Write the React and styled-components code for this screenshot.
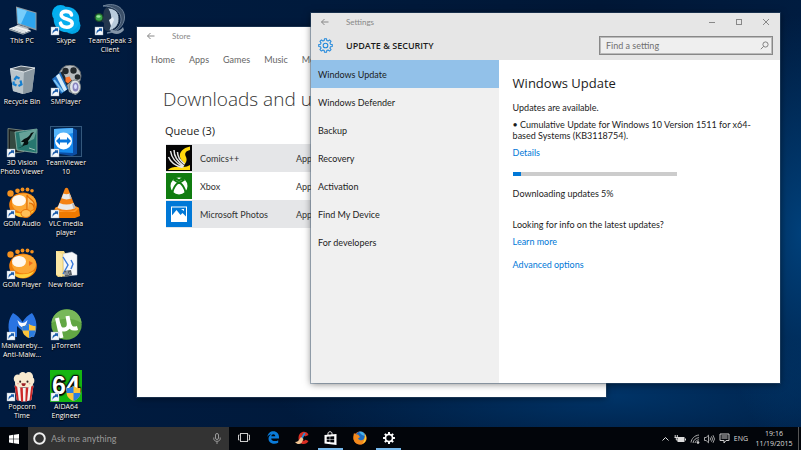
import React, { useState } from "react";
import styled, { createGlobalStyle } from "styled-components";

const GlobalStyle = createGlobalStyle`
  * {
    box-sizing: border-box;
  }
  body {
    margin: 0;
    font-family: Lato, "Open Sans", sans-serif;
    font-size: 9px;
    color: #1c1c1c;
  }
  button, input {
    font: inherit;
    color: inherit;
    border: 0;
    padding: 0;
    background: none;
  }
  ul, h1, h2, p {
    margin: 0;
    padding: 0;
    list-style: none;
    font-weight: 400;
  }
  svg {
    display: block;
    flex: none;
  }
`;

const Screen = styled.div`
  height: 100vh;
  display: flex;
  flex-direction: column;
  overflow: hidden;
  background:
    radial-gradient(ellipse 90px 220px at 100% 52%, #00407a 0%, transparent 100%),
    radial-gradient(ellipse 330px 70px at 76% 88%, #003468 0%, transparent 100%),
    linear-gradient(90deg, #001b40 0%, #001a3c 40%, #001736 75%, #001c40 100%);
`;

const Desktop = styled.main`
  flex: 1;
  min-height: 0;
  position: relative;
  display: flex;
  align-items: flex-start;
  padding-top: 4px;
`;

const IconColumn = styled.div`
  width: 44px;
  display: flex;
  flex-direction: column;
`;

const Shortcut = styled.button`
  height: 61px;
  display: flex;
  flex-direction: column;
  align-items: center;
  color: #fff;
  font-family: "Open Sans", sans-serif;
  font-size: 7px;
  line-height: 9px;
  white-space: pre;
  text-align: center;
  text-shadow: 0 1px 1px #000, 0 0 2px #000;
`;

const Window = styled.section`
  position: absolute;
  display: flex;
  flex-direction: column;
  overflow: hidden;
  background: #fff;
  box-shadow: 0 0 0 1px rgba(60, 90, 120, 0.4), 0 1px 7px rgba(0, 0, 0, 0.5);
`;

const StoreWindow = styled(Window)`
  left: 137px;
  right: 195px;
  top: 27px;
  bottom: 30px;
`;

const SettingsWindow = styled(Window)`
  left: 311px;
  right: 21px;
  top: 13px;
  bottom: 44px;
`;

const TitleBar = styled.header`
  height: 18px;
  flex: none;
  display: flex;
  align-items: center;
  gap: 17px;
  padding: 0 9px;
  font-size: 8px;
  color: #888;
  background: ${(props) => props.$bg || "#fff"};
`;

const WindowButtons = styled.div`
  margin-left: auto;
  display: flex;
  gap: 17px;
`;

const StoreNav = styled.nav`
  display: flex;
  gap: 14px;
  padding: 8px 14px;
  line-height: 14px;
  white-space: nowrap;
`;

const NavLink = styled.a`
  color: #666;
  text-decoration: none;
`;

const StoreBody = styled.div`
  padding: 10px 28px;
`;

const StoreTitle = styled.h1`
  margin-left: -2px;
  font-family: "Open Sans", sans-serif;
  font-size: 19px;
  line-height: 28px;
  font-weight: 300;
  color: #333;
  white-space: nowrap;
`;

const QueueTitle = styled.h2`
  padding: 9px 0 4px;
  font-family: "Open Sans", sans-serif;
  font-size: 11px;
  line-height: 18px;
`;

const QueueRow = styled.li`
  height: 28px;
  display: flex;
  align-items: center;
  gap: 8px;
  margin-left: 1px;
  color: #333;
  background: ${(props) => (props.$shaded ? "#e5e6e8" : "#fff")};
`;

const QueueName = styled.span`
  width: 88px;
  white-space: nowrap;
`;

const SettingsHeader = styled.div`
  height: 29px;
  flex: none;
  display: flex;
  align-items: center;
  gap: 13px;
  padding: 0 7px;
  background: #e6e6e6;
`;

const SettingsTitle = styled.h1`
  font-family: "Open Sans", sans-serif;
  font-size: 9px;
  font-weight: 600;
  flex: 1;
`;

const SearchBox = styled.label`
  width: 174px;
  height: 19px;
  display: flex;
  align-items: center;
  padding: 0 3px 0 6px;
  border: 1px solid #888;
  outline: 1px solid #bbb;
  outline-offset: -2px;
  background: #efefef;

  input {
    flex: 1;
    min-width: 0;
    outline: 0;
  }
  input::placeholder {
    color: #707070;
  }
`;

const SettingsBody = styled.div`
  flex: 1;
  display: flex;
`;

const SideNav = styled.nav`
  width: 40%;
  display: flex;
  flex-direction: column;
  background: #f0f0f0;
`;

const SideItem = styled.button`
  height: 28px;
  padding: 0 7px;
  text-align: left;
  background: ${(props) => (props.$active ? "#92c1e9" : "transparent")};
`;

const Details = styled.div`
  flex: 1;
  padding: 12px 22px 12px 14px;
  line-height: 11px;
`;

const DetailsTitle = styled.h2`
  font-family: "Open Sans", sans-serif;
  font-size: 13px;
  line-height: 22px;
  margin-bottom: 8px;
`;

const Para = styled.p`
  margin-bottom: ${(props) => props.$gap || 6}px;
`;

const Link = styled.a`
  color: #0078d7;
  text-decoration: none;
`;

const Progress = styled.div`
  width: 164px;
  height: 4px;
  background: #ccc;
  margin-bottom: 12px;
`;

const ProgressFill = styled.div`
  height: 4px;
  background: #0078d7;
`;

const Taskbar = styled.footer`
  height: 23px;
  flex: none;
  display: flex;
  background: #02050a;
  color: #ddd;
`;

const StartButton = styled.button`
  width: 28px;
  display: grid;
  place-items: center;
`;

const Cortana = styled.label`
  width: 201px;
  display: flex;
  align-items: center;
  gap: 5px;
  padding: 0 8px 0 5px;
  background: #333;

  input {
    flex: 1;
    min-width: 0;
    outline: 0;
  }
  input::placeholder {
    color: #999;
  }
`;

const TaskButton = styled.button`
  width: 25px;
  margin: 0 2px;
  display: grid;
  place-items: center;
  border-bottom: 2px solid ${(props) => (props.$open ? "#76b9ed" : "transparent")};
`;

const Tray = styled.div`
  margin-left: auto;
  display: flex;
  align-items: center;
  gap: 4px;
  font-family: "Open Sans", sans-serif;
  font-size: 7px;
`;

const Clock = styled.time`
  width: 40px;
  margin-left: 2px;
  line-height: 10px;
  text-align: center;
`;

const ShowDesktop = styled.button`
  width: 3px;
  height: 23px;
  border-left: 1px solid #555;
`;

const Badge = () => (
  <g>
    <rect x="1" y="23" width="8" height="8" fill="#f4f8fc" stroke="#9ab" strokeWidth=".4" />
    <path d="M2.500 30c-.3-3 .8-4.200 2.500-4.400v-1.400h3v3.500l-1-1c-2 .2-3.300 1-4.500 3.300z" fill="#1c5dab" />
  </g>
);

const Shield = ({ x, y, size }) => (
  <svg x={x} y={y} width={size} height={size} viewBox="0 0 14 14">
    <path d="M7 0c2 1.500 4 2 6.500 2v4c0 4-3 6.500-6.500 8C3.500 12.500.5 10 .5 6V2C3 2 5 1.500 7 0z" fill="#fcc43c" />
    <path d="M7 0C5 1.500 3 2 .5 2v4.500H7zM7 6.500h6.500C13.300 10.300 10.300 12.600 7 14z" fill="#2a7de1" />
  </svg>
);

const Glyph = ({ children, shortcut = true }) => (
  <svg width="32" height="32" viewBox="0 0 32 32">
    {children}
    {shortcut && <Badge />}
  </svg>
);

const PcIcon = () => (
  <Glyph shortcut={false}>
    <path d="M10 2.500l20.500 6v18L11 20z" fill="#8f9ba3" />
    <path d="M11 4l18.500 5.300v15.500L12 19z" fill="#2ea5ee" />
    <path d="M11 4l10 2.800L15 20l-3-1z" fill="#77cdfb" />
    <path d="M17 22l5 1.500-1 3-5-2z" fill="#8e979d" />
    <path d="M12 20.500l12 4.500-4 1.500-11-4z" fill="#b8c0c5" />
    <path d="M3 24.500l7-2.500 15 4.500-8 3z" fill="#eef1f2" />
    <path d="M3 24.500l14 5 8-3v1l-8 3.200L3 26z" fill="#9aa5ab" />
    <path d="M6 24.500l12 4M8 23.600l12 4" stroke="#b4bdc2" strokeWidth=".5" />
  </Glyph>
);

const SkypeIcon = () => (
  <Glyph>
    <circle cx="10.500" cy="9.500" r="8.500" fill="#00aff0" />
    <circle cx="22" cy="21.500" r="8.500" fill="#00a4e4" />
    <circle cx="16.500" cy="15.500" r="12.800" fill="#08aeee" />
    <path d="M21.500 11c-.8-4.500-10.300-5-10.300-.3 0 5.500 11 3 11 8.800 0 5-10.500 5-11.700-.3" fill="none" stroke="#fff" strokeWidth="3.600" strokeLinecap="round" />
  </Glyph>
);

const TeamSpeakIcon = () => (
  <Glyph>
    <path d="M9 2c14-5 24 4 21 15-2 7-9 12-17 12 10-2 14-8 14-14C27 7 19 2 9 2z" fill="#3b5069" stroke="#7f93a8" strokeWidth=".8" />
    <path d="M13 4c8 0 12 4 12 11s-5 11-11 12c4-6 4-18-1-23z" fill="#b8cbdc" stroke="#26394f" />
    <path d="M13 3c-3 2-4 5-3.500 9L7 17l3 2v4c0 3 2 4 5 4 3-6 3-18-2-24z" fill="#24374e" />
    <path d="M15 16l4-3 1 3-3 6z" fill="#e7eff7" />
    <path d="M18 25c4 4 9 1 11-2l1 3c-4 5-10 5-14 1z" fill="#8395a8" />
    <circle cx="5" cy="13.500" r="4.500" fill="#1d4429" />
    <circle cx="5" cy="13.500" r="3.300" fill="#38a64a" />
    <ellipse cx="4.500" cy="12.500" rx="2" ry="1.200" fill="#9be69c" />
  </Glyph>
);

const BinIcon = () => (
  <Glyph shortcut={false}>
    <path d="M4 4l11-3 14 2-3 23.500-9 2.500L7 26z" fill="#a9b4bc" />
    <path d="M4 4l14 3-1 22-10-3z" fill="#bac4ca" />
    <path d="M18 7l11-4-3 23.500-9 2.500z" fill="#8c99a2" />
    <path d="M4 4l11-3 14 2-11 4z" fill="#59646d" />
    <path d="M4 4l11-3 14 2-11 4z" fill="none" stroke="#e6ebee" strokeWidth=".9" />
    <g fill="none" stroke="#157fd0" strokeWidth="2.200">
      <path d="M8.300 15l2.200-3 3 1.500M14.500 15.500l1 4-3 1.500M10.500 20.500L7.500 19l.2-2.500" />
    </g>
  </Glyph>
);

const SmPlayerIcon = () => (
  <Glyph>
    <circle cx="20" cy="11" r="11" fill="#b9bdc0" stroke="#60676c" />
    <g fill="#24292d">
      <circle cx="15.500" cy="6" r="3.200" />
      <circle cx="23.500" cy="5.500" r="3.200" />
      <circle cx="27.500" cy="12" r="2.800" />
      <circle cx="20" cy="17" r="2.500" />
    </g>
    <path d="M2 14L11 7l8 16-8 6z" fill="#2170c3" />
    <path d="M6 11l3-2.500 8 16-3 2z" fill="#d6ecfb" />
    <path d="M10.500 7.500l2-1.500 8 17-2 1.500z" fill="#222b34" />
    <path d="M4 15l9 12" stroke="#80c6f4" strokeWidth="2" />
    <path d="M15.500 12.500l4-1 2 4-3.500 3-2.500-2z" fill="#ff762d" />
    <path d="M17 20l6-5c5-1 8 3 7 8l-4 7-7-3z" fill="#9ca4a8" />
    <ellipse cx="25" cy="22" rx="5.500" ry="7" fill="#e0e4e6" stroke="#747c80" />
    <ellipse cx="25.500" cy="22" rx="3" ry="4.500" fill="#8884bd" />
    <ellipse cx="25.500" cy="21.500" rx="1.500" ry="2.500" fill="#d9dcff" />
  </Glyph>
);

const VisionIcon = () => (
  <Glyph>
    <path d="M2 2.500l16 2v21L2 28z" fill="#1c2120" stroke="#718078" />
    <path d="M4 5l13 2v16L4 25z" fill="#344941" />
    <path d="M9 6l22-3v24l-20-3z" fill="#27776f" stroke="#8fb5aa" strokeWidth=".8" />
    <path d="M13 7l18-4-3 10-13 6z" fill="#66a298" />
    <path d="M12 22c5-1 5-3 6-6l-3 0c4-5 7-3 10-9l3-1c-3 4-4 7-6 9 1 2 0 4-2 4-3 0-4 3-8 3z" fill="#06100f" />
    <path d="M23 22l6 2" stroke="#a3c4b9" />
  </Glyph>
);

const TeamViewerIcon = () => (
  <Glyph>
    <rect x=".5" y=".5" width="31" height="30" fill="#04234a" stroke="#34587c" />
    <path d="M4 3l19-1 4 2v24l-5 2L4 27z" fill="#0b4da3" />
    <path d="M4 3l19-1v25L4 26z" fill="#1689ed" />
    <path d="M4 3l19-1v5L4 11z" fill="#55b4fa" />
    <circle cx="13.500" cy="15" r="8.500" fill="#fff" />
    <path d="M6 15l4-4v2.500h7V11l4 4-4 4v-2.500h-7V19z" fill="#0876dc" />
  </Glyph>
);

const Paw = () => (
  <g>
    <g fill="#f5911e">
      <circle cx="4.500" cy="6.500" r="3.200" />
      <circle cx="11.500" cy="3.800" r="2.300" />
      <circle cx="16.500" cy="2.500" r="1.900" />
      <circle cx="21.500" cy="2.500" r="1.900" />
      <circle cx="26" cy="3.800" r="1.800" />
    </g>
    <ellipse cx="17" cy="18" rx="13.800" ry="12.500" fill="#f17e08" />
    <ellipse cx="18" cy="16" rx="12" ry="9.500" fill="#fca835" />
    <path d="M7 25c4 7 17 7 21-2-5 4-14 4-21 2z" fill="#ffd03c" />
    <ellipse cx="13" cy="13.500" rx="7" ry="5.500" fill="#fff" opacity=".92" />
  </g>
);

const GomAudioIcon = () => (
  <Glyph>
    <Paw />
    <path d="M21 27V8c2 5 9 5 7 12-1-4-4-4-5-4" fill="#fbc36b" stroke="#e16b00" strokeWidth="1.200" />
    <ellipse cx="20" cy="26.500" rx="5" ry="4" fill="#ffbf58" stroke="#e77508" />
  </Glyph>
);

const GomPlayerIcon = () => (
  <Glyph>
    <Paw />
    <path d="M23 13l4 2-4 3z" fill="#ef6d1a" />
  </Glyph>
);

const VlcIcon = () => (
  <Glyph>
    <path d="M5 21l4-2h16l4 2 1 8-5 2H6l-3-3z" fill="#ef7a00" />
    <path d="M5 21l4-2h16l4 2-4 4H9z" fill="#ff9d2e" />
    <path d="M15 1.500q1.500-1.500 3 0l8 20.500c-3 3.500-16 3.500-19 0z" fill="#f58213" />
    <path d="M13.400 6.500q3 1.500 6.200 0l1.900 4.800q-4.800 2.200-10 0zM9.500 16q7 3 14 0l2 5q-9 4-18 0z" fill="#e9e9e9" />
    <path d="M19 6.800l.6-.3 1.900 4.800-1.500.5zM22 16.700l1.500-.7 2 5-2 .8z" fill="#bbb" />
  </Glyph>
);

const FolderIcon = () => (
  <Glyph shortcut={false}>
    <path d="M6 3h8l1 2h5v23l-12 1-2-2z" fill="#f6d982" />
    <path d="M6 3l6 3v23l-6-3z" fill="#fbe7a4" />
    <path d="M13 6l9-2 5 3v20l-13 1z" fill="#f5f7fa" stroke="#bbc3ca" strokeWidth=".5" />
    <path d="M13 9l5 8-5 9M21 12l2 4-2 5" fill="none" stroke="#3678dc" strokeWidth="1.400" />
    <path d="M14 23l7-1 1 5-7 2z" fill="#555d65" />
    <path d="M15 24l1 3 1-4 1 4 2-3" stroke="#b9c0c5" strokeWidth=".6" fill="none" />
  </Glyph>
);

const MalwareIcon = () => (
  <Glyph>
    <path d="M7 4c4 2 7 5 9.500 9C19 9 22 6 26 4c5 6 6 16 2 24h-6V17l-5.500 5-5.500-5v11H5C1 20 2 10 7 4z" fill="#2a74e2" />
    <path d="M11.500 11c1 5 3 7 5 7s4-2 5-7c-3 4-7 4-10 0z" fill="#f6faff" />
    <Shield x={16} y={15} size={14} />
  </Glyph>
);

const TorrentIcon = () => (
  <Glyph>
    <circle cx="16.500" cy="15.500" r="15.200" fill="#62a744" />
    <path d="M1.500 14C3-3 30-5 31.500 14c-10-6-20-5-30 0z" fill="#78b85a" />
    <path d="M7 9l4.500 20M8.500 15c1 5 3 6 6 5.500 4-.7 5-4 4-8L17.500 7M18.500 12c1 6 3 9 9 7" fill="none" stroke="#fff" strokeWidth="4" />
  </Glyph>
);

const PopcornIcon = () => (
  <Glyph>
    <g transform="translate(3 1) scale(.86 .97)">
      <g fill="#f8ead0">
        <circle cx="10" cy="8" r="4.500" />
        <circle cx="16" cy="5.500" r="4.500" />
        <circle cx="23" cy="6" r="5" />
        <circle cx="26" cy="10" r="3.500" />
        <rect x="7" y="7" width="21" height="10" rx="4" />
      </g>
      <path d="M6.500 15q11 5 22 0L26 30q-8.500 3-17 0z" fill="#f5f2ef" />
      <path d="M6.500 15l3 1.300L11.500 31 9 30zM13 17h3l.5 14.600h-2.500zM19.500 17h3L21 31.400h-2zM25.800 16l2.700-1L26 30l-2.200.8z" fill="#cc2727" />
      <circle cx="13" cy="11" r="1.200" fill="#352320" />
      <circle cx="21.500" cy="11" r="1.200" fill="#352320" />
      <path d="M14.500 12.500h5c0 4-5 4-5 0z" fill="#9c1f24" />
      <circle cx="10.500" cy="13" r="1" fill="#efaaa0" />
      <circle cx="24" cy="13" r="1" fill="#efaaa0" />
    </g>
  </Glyph>
);

const AidaIcon = () => (
  <Glyph>
    <rect width="32" height="32" fill="#16b611" />
    <text x="2" y="24" fontFamily="Liberation Sans, sans-serif" fontSize="25" fontWeight="700" fill="#fff" stroke="#111" strokeWidth="1.500" paintOrder="stroke">
      64
    </text>
    <Shield x={16} y={16} size={15} />
  </Glyph>
);

const columns = [
  [
    ["This PC", PcIcon],
    ["Recycle Bin", BinIcon],
    ["3D Vision\nPhoto Viewer", VisionIcon],
    ["GOM Audio", GomAudioIcon],
    ["GOM Player", GomPlayerIcon],
    ["Malwareby...\nAnti-Malw...", MalwareIcon],
    ["Popcorn\nTime", PopcornIcon],
  ],
  [
    ["Skype", SkypeIcon],
    ["SMPlayer", SmPlayerIcon],
    ["TeamViewer\n10", TeamViewerIcon],
    ["VLC media\nplayer", VlcIcon],
    ["New folder", FolderIcon],
    ["µTorrent", TorrentIcon],
    ["AIDA64\nEngineer", AidaIcon],
  ],
  [["TeamSpeak 3\nClient", TeamSpeakIcon]],
];

const ComicsIcon = () => (
  <svg width="26" height="26" viewBox="0 0 26 26">
    <rect width="26" height="26" fill="#050505" />
    <path d="M24 1.500C17 3 13 7 14 12c1 4 4 4 4 8 3-3 3-6 2-8-2-4 0-6 4-7z" fill="#ffd90c" />
    <path d="M2 25c3-4 10-3 15-3 3 0 5-1 7-2v5z" fill="#ffd90c" />
    <path d="M4.500 6c1 7 5 12 13 16M8 5c0 7 4 12 10 16M11.500 7c0 5 3 9 7 12M2.500 12c2 5 7 9 14 10.500" fill="none" stroke="#e6e6e6" strokeWidth="1.500" />
  </svg>
);

const XboxIcon = () => (
  <svg width="26" height="26" viewBox="0 0 26 26">
    <rect width="26" height="26" fill="#107c10" />
    <circle cx="13" cy="13" r="8.500" fill="#fff" />
    <path d="M8 5.500c2 0 4 1 5 2 1-1 3-2 5-2M13 9C9 12 7 16 6.500 19.500M13 9c4 3 6 7 6.500 10.500M7.500 6.500L13 10l5.500-3.500" fill="none" stroke="#107c10" strokeWidth="1.900" />
  </svg>
);

const PhotosIcon = () => (
  <svg width="26" height="26" viewBox="0 0 26 26">
    <rect width="26" height="26" fill="#0078d7" />
    <rect x="5.500" y="6" width="15" height="14.500" fill="none" stroke="#fff" />
    <path d="M5.500 20.500V15l5-6 4 5 2-2 4 4v4.500z" fill="#fff" />
    <path d="M15 8h3v2z" fill="#fff" />
  </svg>
);

const queue = [
  ["Comics++", ComicsIcon],
  ["Xbox", XboxIcon],
  ["Microsoft Photos", PhotosIcon],
];

const BackArrow = () => (
  <svg width="9" height="8" viewBox="0 0 9 8" fill="none" stroke="#888">
    <path d="M8.500 4H1.500M4.500 1l-3 3 3 3" />
  </svg>
);

// toothed wheel, each tooth is four points on two radii
const gearPath = (teeth, outer, inner) => {
  const step = (Math.PI * 2) / teeth;
  const points = [];
  for (let i = 0; i < teeth; i++) {
    [[-0.32, inner], [-0.2, outer], [0.2, outer], [0.32, inner]].forEach(([k, r]) => {
      const a = (i + k) * step;
      points.push(`${(8 + r * Math.sin(a)).toFixed(2)} ${(8 - r * Math.cos(a)).toFixed(2)}`);
    });
  }
  return `M${points.join("L")}Z`;
};

const Gear = () => (
  <svg width="15" height="15" viewBox="0 0 16 16" fill="none" stroke="#1e87dc" strokeWidth="1.100">
    <path d={gearPath(8, 7.3, 5.5)} strokeLinejoin="round" />
    <circle cx="8" cy="8" r="2.500" />
  </svg>
);

const SolidGear = () => (
  <svg width="12" height="12" viewBox="0 0 16 16" fill="#fff">
    <path d={gearPath(8, 8, 5.8)} />
    <circle cx="8" cy="8" r="3.600" fill="#02050a" />
  </svg>
);

const Store = () => (
  <StoreWindow>
    <TitleBar>
      <BackArrow />
      Store
    </TitleBar>
    <StoreNav>
      {["Home", "Apps", "Games", "Music", "Movies & TV"].map((title) => (
        <NavLink href="#" key={title}>
          {title}
        </NavLink>
      ))}
    </StoreNav>
    <StoreBody>
      <StoreTitle>Downloads and updates</StoreTitle>
      <QueueTitle>Queue (3)</QueueTitle>
      <ul>
        {queue.map(([name, Icon], index) => (
          <QueueRow key={name} $shaded={index % 2 === 0}>
            <Icon />
            <QueueName>{name}</QueueName>
            <span>App</span>
          </QueueRow>
        ))}
      </ul>
    </StoreBody>
  </StoreWindow>
);

const pages = [
  "Windows Update",
  "Windows Defender",
  "Backup",
  "Recovery",
  "Activation",
  "Find My Device",
  "For developers",
];

const Settings = () => {
  const [page, setPage] = useState(pages[0]);
  const percent = 5;

  return (
    <SettingsWindow>
      <TitleBar $bg="#e6e6e6">
        <BackArrow />
        Settings
        <WindowButtons>
          <button aria-label="Minimize">
            <svg width="10" height="8" viewBox="0 0 10 8" stroke="#888">
              <path d="M2 4.500h6" />
            </svg>
          </button>
          <button aria-label="Maximize">
            <svg width="10" height="8" viewBox="0 0 10 8" stroke="#888" fill="none">
              <rect x="2.500" y="1.500" width="5" height="5" />
            </svg>
          </button>
          <button aria-label="Close">
            <svg width="10" height="8" viewBox="0 0 10 8" stroke="#888">
              <path d="M2 1l6 6M8 1L2 7" />
            </svg>
          </button>
        </WindowButtons>
      </TitleBar>
      <SettingsHeader>
        <Gear />
        <SettingsTitle>UPDATE &amp; SECURITY</SettingsTitle>
        <SearchBox>
          <input aria-label="Find a setting" placeholder="Find a setting" />
          <svg width="9" height="9" viewBox="0 0 9 9" fill="none" stroke="#777" strokeWidth=".9">
            <circle cx="5.500" cy="3.500" r="2.600" />
            <path d="M3.600 5.400L.8 8.200" />
          </svg>
        </SearchBox>
      </SettingsHeader>
      <SettingsBody>
        <SideNav>
          {pages.map((title) => (
            <SideItem key={title} $active={title === page} onClick={() => setPage(title)}>
              {title}
            </SideItem>
          ))}
        </SideNav>
        <Details>
          <DetailsTitle>Windows Update</DetailsTitle>
          <Para>Updates are available.</Para>
          <Para>• Cumulative Update for Windows 10 Version 1511 for x64-based Systems (KB3118754).</Para>
          <Para $gap={14}>
            <Link href="#">Details</Link>
          </Para>
          <Progress role="progressbar" aria-label="Download" aria-valuenow={percent}>
            <ProgressFill style={{ width: `${percent}%` }} />
          </Progress>
          <Para $gap={20}>Downloading updates {percent}%</Para>
          <Para>Looking for info on the latest updates?</Para>
          <Para $gap={12}>
            <Link href="#">Learn more</Link>
          </Para>
          <Para>
            <Link href="#">Advanced options</Link>
          </Para>
        </Details>
      </SettingsBody>
    </SettingsWindow>
  );
};

const Bar = () => (
  <Taskbar>
    <StartButton aria-label="Start">
      <svg width="10" height="10" viewBox="0 0 10 10" fill="#fff">
        <path d="M0 1.400l4.400-.6v3.900H0zM5 .7L10 0v4.700H5zM0 5.300h4.400v3.900L0 8.600zM5 5.300h5V10l-5-.7z" />
      </svg>
    </StartButton>
    <Cortana>
      <svg width="13" height="13" viewBox="0 0 13 13" fill="none" stroke="#eee" strokeWidth="1.900">
        <circle cx="6.500" cy="6.500" r="5.300" />
      </svg>
      <input aria-label="Ask me anything" placeholder="Ask me anything" />
      <svg width="8" height="11" viewBox="0 0 8 11" fill="none" stroke="#999">
        <rect x="2.500" y=".5" width="3" height="6" rx="1.500" />
        <path d="M.8 4.500v1.300c0 3.400 6.400 3.400 6.400 0V4.500M4 8.500V11" />
      </svg>
    </Cortana>
    <TaskButton aria-label="Task view">
      <svg width="12" height="10" viewBox="0 0 12 10" fill="none" stroke="#ccc">
        <rect x="2.500" y=".5" width="7" height="8" />
        <path d="M1.500 2H.5v5h1M10.500 2h1v5h-1" />
      </svg>
    </TaskButton>
    <TaskButton aria-label="Edge">
      <svg width="12" height="13" viewBox="0 0 12 13">
        <path d="M.3 6C1 2 3.300.2 6.300.2 9.800.2 12 2.800 12 6v1.500H4.200c.2 3 4.800 3.200 7 1.700v2.600C7.500 14 1.600 12.800 1.500 7.800 1.500 5.600 2.700 4 4.500 3.200 2.800 3.300 1.300 4.200.3 6zm4-.8h4C8.300 2.500 4.600 2.400 4.300 5.200z" fill="#0a7bd8" />
      </svg>
    </TaskButton>
    <TaskButton aria-label="CCleaner">
      <svg width="14" height="14" viewBox="0 0 14 14">
        <path d="M13.500 4L10 5.500C8.500 3.500 6.500 5 6.500 7.200c0 2.400 2.500 3.400 4 1.600l3 1.200c-2 4.500-10 4-10-2.800C3.500-.5 12-1 13.500 4z" fill="#d92d22" />
        <path d="M9 1.500L6 7l1.500 1L10.500 2.500z" fill="#2b8dd6" />
        <path d="M6 6l2.500 2-2 4c-2 2-5 1-6.500-1 3 0 4-2 6-5z" fill="#f2c593" />
      </svg>
    </TaskButton>
    <TaskButton aria-label="Store" $open>
      <svg width="13" height="14" viewBox="0 0 13 14">
        <path d="M4 4V2.500C4 .2 8 .2 8 2.500V4" fill="none" stroke="#fff" />
        <path d="M.5 4L12.500 3v11L.5 12.500z" fill="#fff" />
        <path d="M2.700 5.800l3-.2v2.500h-3zM6.200 5.500l4-.3v2.900h-4zM2.700 8.600h3v2.500l-3-.3zM6.200 8.600h4v3l-4-.4z" fill="#02050a" />
      </svg>
    </TaskButton>
    <TaskButton aria-label="Firefox">
      <svg width="14" height="14" viewBox="0 0 14 14">
        <circle cx="7" cy="7" r="6.500" fill="#e8641c" />
        <circle cx="7.500" cy="5.500" r="5" fill="#1c6ec4" />
        <path d="M6 1c3-1 6 1 6 4L9 4z" fill="#45b4ed" />
        <path d="M1 2c1 1 2 1.500 4 1.500L7 6 5 7.500c1 2 4 2.500 6 .5 1-1 1-3 .5-5 2 2 2.500 4.500 1.500 7-3 5.500-11 4.500-12.500-1.500C.2 6 .5 4 1 2z" fill="#f48a1d" />
        <path d="M12 3c2 4 1 8-2.500 9.500 1.500-2 2.500-5 2.500-9.500z" fill="#fbd13b" />
      </svg>
    </TaskButton>
    <TaskButton aria-label="Settings" $open>
      <SolidGear />
    </TaskButton>
    <Tray>
      <svg width="9" height="8" viewBox="0 0 9 8" fill="none" stroke="#ddd">
        <path d="M1.500 5.500L4.500 2.500l3 3" />
      </svg>
      <svg width="12" height="10" viewBox="0 0 12 10" fill="none" stroke="#ddd">
        <rect x="4" y="3.500" width="6" height="4" fill="#ddd" />
        <path d="M11.500 4.500v2M1.200 1v2M3.300 1v2M.5 3.500h3.500M2.300 3.500v2.500H5" />
      </svg>
      <svg width="10" height="10" viewBox="0 0 10 10" fill="none" stroke="#bbb" strokeWidth=".9">
        <path d="M1 8.500C1.500 4.500 4.500 1.500 9 1M3 9c.3-3 2.800-5 6-5.400M5 9c.3-1.800 2-3 4-3.200" />
        <circle cx="8" cy="8.500" r="1" fill="#eee" />
      </svg>
      <svg width="11" height="10" viewBox="0 0 11 10" fill="none" stroke="#ccc" strokeWidth=".8">
        <path d="M.5 3.500h1.600L4.500 1.200v7.600L2.100 6.500H.5zM6 3.500q1 1.500 0 3M7.500 2.300q2 2.700 0 5.400M9 1.200q3 3.800 0 7.600" />
      </svg>
      <svg width="11" height="11" viewBox="0 0 11 11" fill="none" stroke="#ccc">
        <path d="M1 1h9v6.500H7L5 10V7.500H1zM2.500 3h6M2.500 5h6" />
      </svg>
      <span>ENG</span>
      <Clock>
        19:16
        <br />
        11/19/2015
      </Clock>
      <ShowDesktop aria-label="Show desktop" />
    </Tray>
  </Taskbar>
);

const App = () => {
  return (
    <>
      <GlobalStyle />
      <Screen>
        <Desktop>
          {columns.map((items, index) => (
            <IconColumn key={index}>
              {items.map(([label, Icon]) => (
                <Shortcut key={label}>
                  <Icon />
                  {label}
                </Shortcut>
              ))}
            </IconColumn>
          ))}
          <Store />
          <Settings />
        </Desktop>
        <Bar />
      </Screen>
    </>
  );
};

export default App;
